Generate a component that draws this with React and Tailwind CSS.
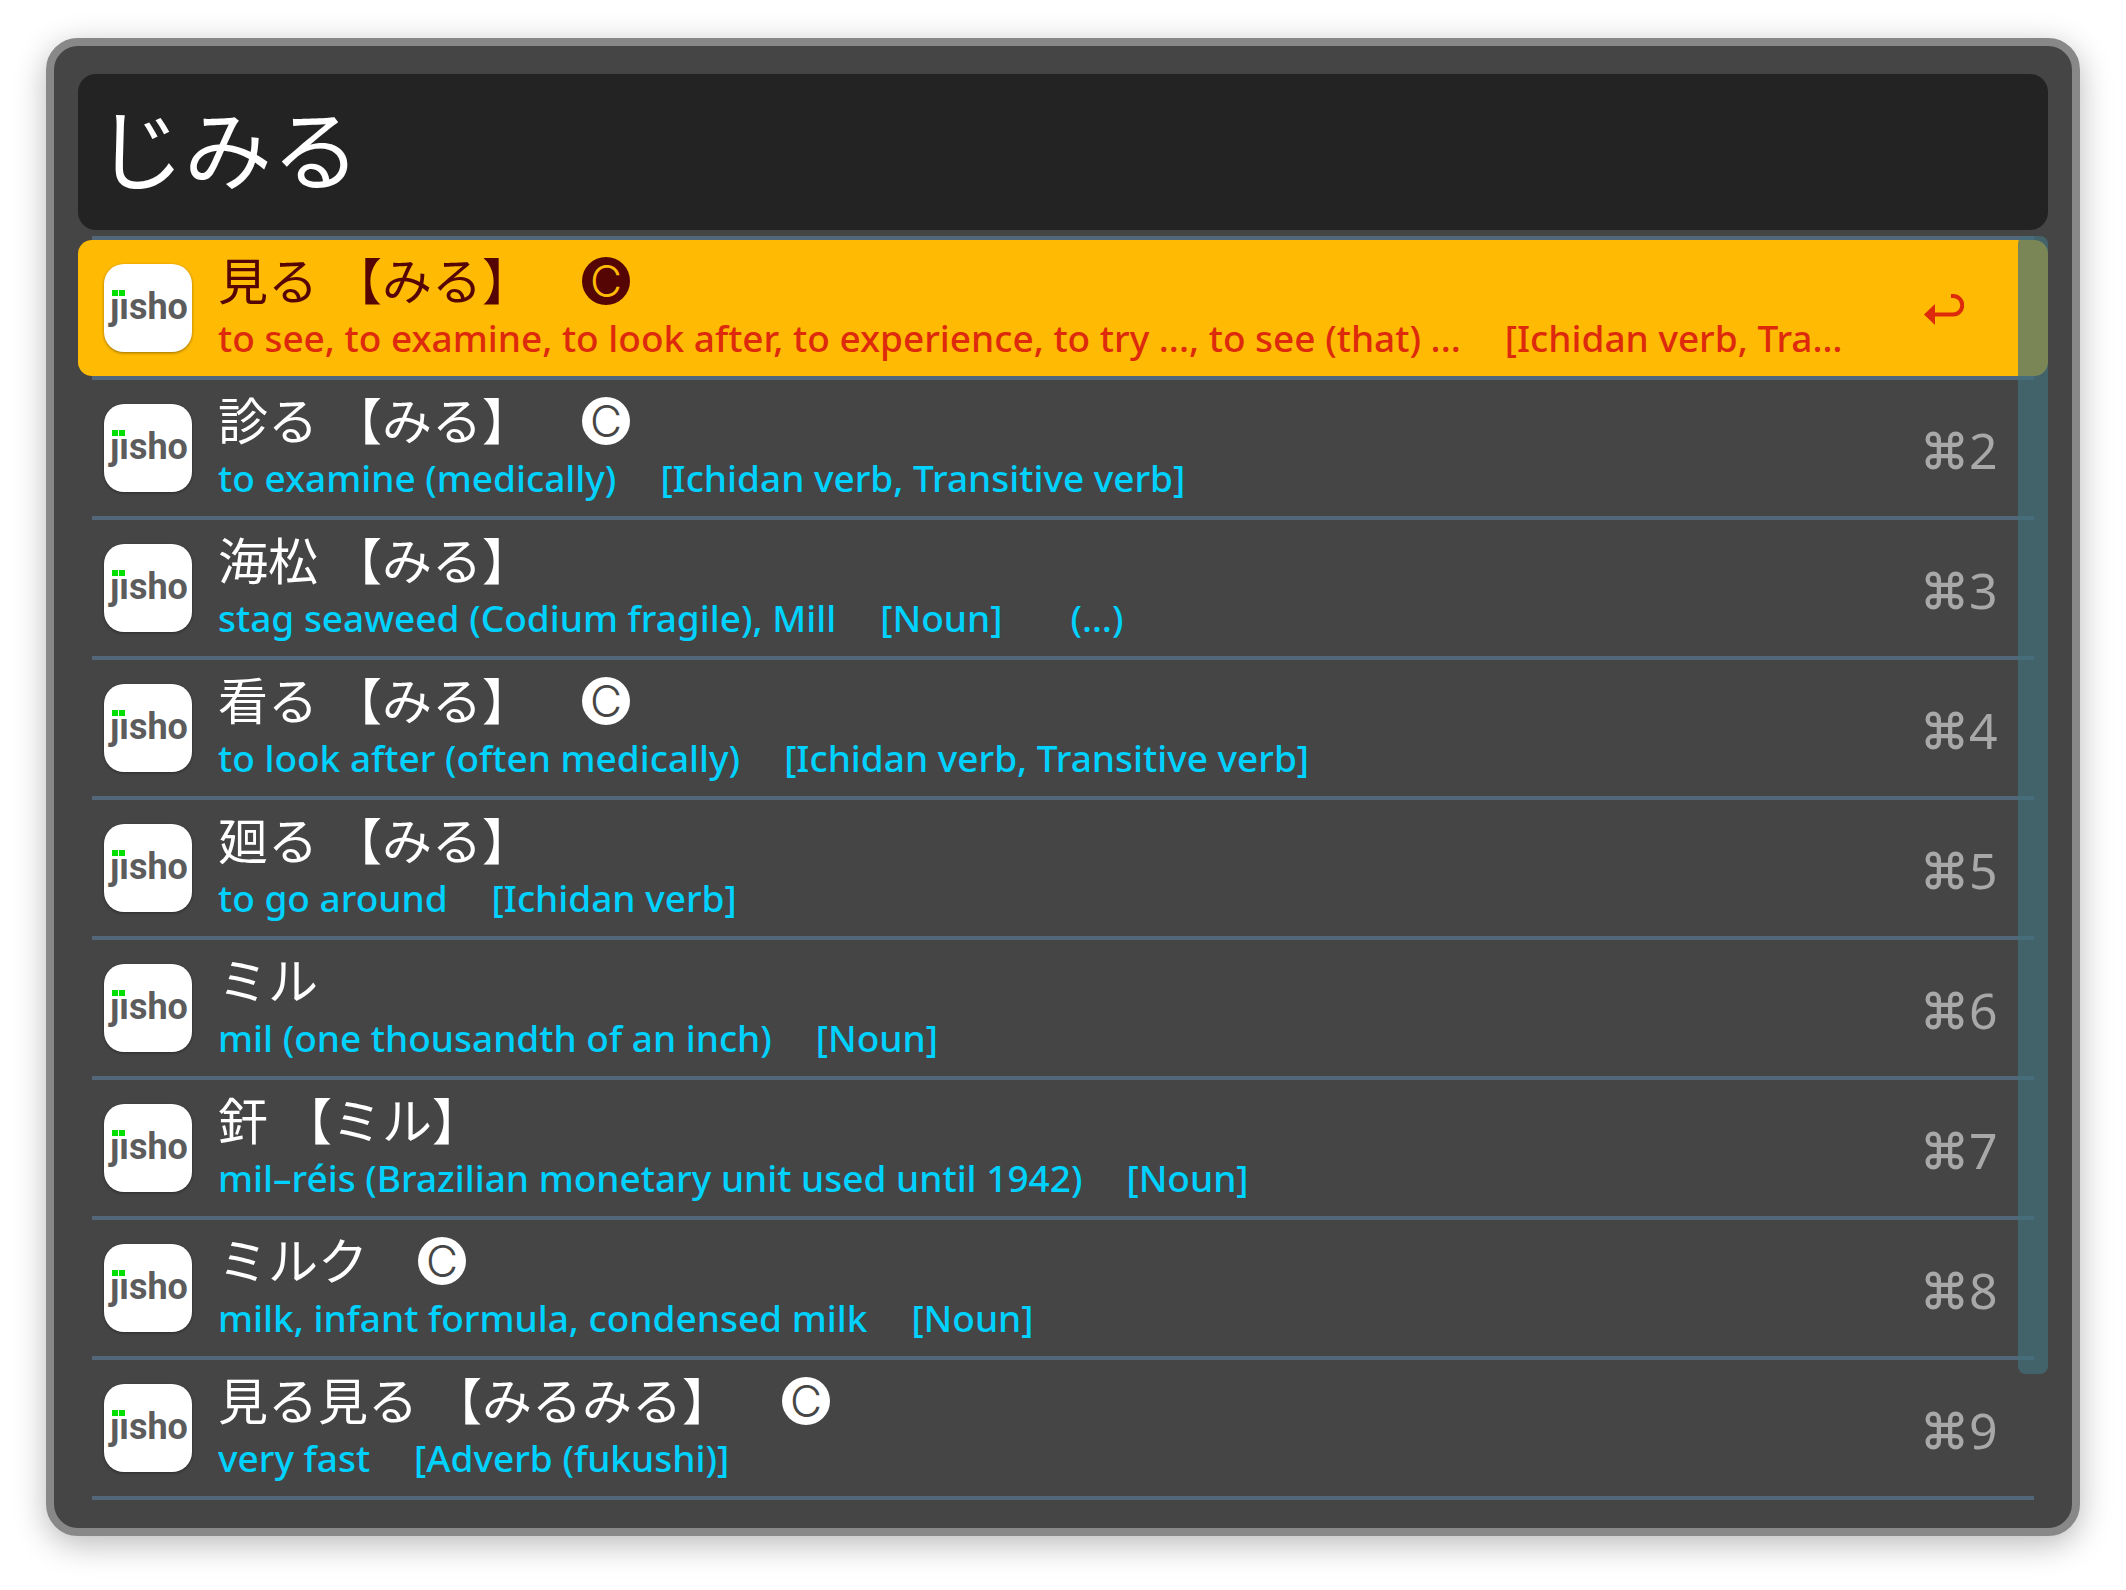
import { useState } from "react";
import { Command } from "lucide-react";

const results = [
  { word: "見る", reading: "みる", common: true, meaning: "to see, to examine, to look after, to experience, to try ..., to see (that) ...", kind: "[Ichidan verb, Tra…" },
  { word: "診る", reading: "みる", common: true, meaning: "to examine (medically)", kind: "[Ichidan verb, Transitive verb]" },
  { word: "海松", reading: "みる", meaning: "stag seaweed (Codium fragile), Mill", kind: "[Noun]", more: "(…)" },
  { word: "看る", reading: "みる", common: true, meaning: "to look after (often medically)", kind: "[Ichidan verb, Transitive verb]" },
  { word: "廻る", reading: "みる", meaning: "to go around", kind: "[Ichidan verb]" },
  { word: "ミル", meaning: "mil (one thousandth of an inch)", kind: "[Noun]" },
  { word: "釬", reading: "ミル", meaning: "mil–réis (Brazilian monetary unit used until 1942)", kind: "[Noun]" },
  { word: "ミルク", common: true, meaning: "milk, infant formula, condensed milk", kind: "[Noun]" },
  { word: "見る見る", reading: "みるみる", common: true, meaning: "very fast", kind: "[Adverb (fukushi)]" },
];

function JishoLogo() {
  return (
    <svg viewBox="0 0 88 88" className="size-22 shrink-0 rounded-[20px] bg-white shadow-[0_1px_3px_rgba(0,0,0,0.4)]" role="img" aria-label="jisho">
      <text x="6" y="55" fill="#5c5c5c" fontSize="36" fontWeight="700" fontFamily="Roboto, sans-serif">
        jisho
      </text>
      <rect x="4" y="24" width="20" height="10" fill="#fff" />
      <rect x="8" y="26" width="6" height="6" fill="#00e000" />
      <rect x="15" y="26" width="6" height="6" fill="#00e000" />
    </svg>
  );
}

function ReturnArrow() {
  return (
    <svg viewBox="0 0 40 31" className="h-[31px] w-10" aria-label="Return" role="img">
      <path d="M27 2h2a9.25 9.25 0 0 1 0 18.5H10" fill="none" stroke="currentColor" strokeWidth="4" />
      <path d="M0 20.5 11 10v21z" fill="currentColor" />
    </svg>
  );
}

function CommonBadge({ selected }) {
  return (
    <span
      className={
        "mt-1.5 ml-[50px] flex size-12 items-center justify-center rounded-full font-['Inter'] text-[44px] leading-[48px] font-light " +
        (selected ? "bg-[#550503] text-[#ffba03]" : "bg-white text-[#464646]")
      }
    >
      C
    </span>
  );
}

function Result({ item, index, selected }) {
  return (
    <li className="relative border-b-4 border-transparent after:absolute after:inset-x-[14px] after:top-full after:h-1 after:bg-[#53677a]">
      <button
        type="button"
        className={
          "flex h-[136px] w-full items-center rounded-[14px] pl-[26px] pr-[54px] text-left " +
          (selected ? "bg-[#ffba03] text-[#550503]" : "text-white")
        }
      >
        <JishoLogo />
        <span className="ml-[26px] flex min-w-0 flex-1 flex-col gap-1 pb-1">
          <span className="flex h-[60px] items-center whitespace-nowrap text-[50px] leading-[60px]">
            <span>{item.word}</span>
            {item.reading && <span className="ml-[14px]">【{item.reading}】</span>}
            {item.common && <CommonBadge selected={selected} />}
          </span>
          <span
            className={
              "block truncate font-['Noto_Sans'] text-[37px] leading-[52px] font-medium " +
              (selected ? "text-[#dd2a0c]" : "text-[#00d2ff]")
            }
          >
            {item.meaning}
            <span className="ml-11">{item.kind}</span>
            {item.more && <span className="ml-[68px]">{item.more}</span>}
          </span>
        </span>
        <span className={"ml-6 flex w-[70px] shrink-0 items-center " + (selected ? "pt-0.5 text-[#dd2a0c]" : "pt-1 text-[#a8a8a8]")}>
          {selected ? (
            <ReturnArrow />
          ) : (
            <>
              <Command className="-ml-0.5 size-[45px] shrink-0" strokeWidth={2.3} aria-label="Command" />
              <span className="ml-0.5 font-['Noto_Sans'] text-[50px] leading-[60px]">{index + 1}</span>
            </>
          )}
        </span>
      </button>
    </li>
  );
}

export default function App() {
  const [query, setQuery] = useState("じみる");
  return (
    <div className="bg-white px-[46px] pt-[38px] pb-[54px] font-['Noto_Sans_CJK_JP',sans-serif]">
      <main className="rounded-[32px] border-8 border-[#888] bg-[#454545] px-6 py-7 shadow-[0_8px_32px_rgba(0,0,0,0.28)]">
        <input
          type="text"
          aria-label="Search Jisho"
          value={query}
          onChange={(e) => setQuery(e.target.value)}
          className="block h-[156px] w-full rounded-[18px] bg-[#232323] px-[18px] pb-4 text-[88px] text-white outline-none"
        />
        <div className="relative mt-1.5">
          <div className="mx-[14px] h-1 bg-[#53677a]" />
          <ul>
            {results.map((item, i) => (
              <Result key={item.word} item={item} index={i} selected={i === 0} />
            ))}
          </ul>
          <div className="absolute top-0 right-0 h-[90%] w-[30px] rounded-lg bg-[#43707a]/70" />
        </div>
      </main>
    </div>
  );
}
